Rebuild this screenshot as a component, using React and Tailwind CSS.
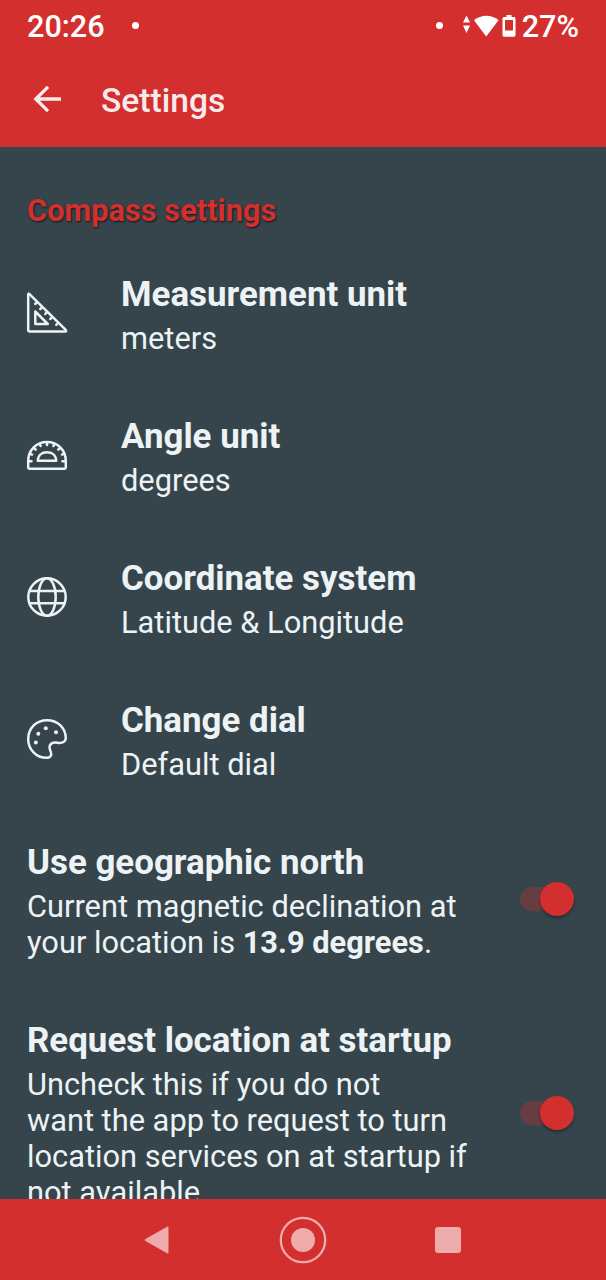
const iconProps = {
  width: 42,
  height: 42,
  viewBox: '0 0 42 42',
  fill: 'none',
  stroke: 'currentColor',
  strokeWidth: 2.5,
  strokeLinecap: 'round',
  strokeLinejoin: 'round',
}

const SetSquareIcon = () => (
  <svg {...iconProps}>
    <path d="M2.2 2.8 Q2.2 1 3.7 2.3 L39.5 37.7 Q41 39.5 39 39.5 H3.4 Q2.2 39.5 2.2 38.3 Z" />
    <path d="M9.3 19.5 V32 H21.8 Z" />
    <path d="M11 10.3 L9.2 12 M16 15.3 L14.3 17 M21 20.2 L19.3 22 M26 25.2 L24.3 27 M32 31 L30.3 32.8" />
  </svg>
)

const ProtractorIcon = () => (
  <svg {...iconProps}>
    <path d="M2.2 33.5 V27 C2.2 16 10.5 7.9 21 7.9 C31.5 7.9 39.8 16 39.8 27 V33.5 Q39.8 34.7 38.6 34.7 H3.4 Q2.2 34.7 2.2 33.5 Z" />
    <path d="M11.8 26.8 C12 21.3 16 18.3 21 18.3 C26 18.3 30 21.3 30.2 26.8 Z" />
    <path d="M3 27.2 H5.5 M3.8 19.7 L6 20.6 M8 14 L9.7 15.7 M13.6 9.8 L14.6 12 M21 8.5 V11 M28.4 9.8 L27.4 12 M34 14 L32.3 15.7 M38.2 19.7 L36 20.6 M39 27.2 H36.5" />
  </svg>
)

const GlobeIcon = () => (
  <svg {...iconProps}>
    <circle cx="21" cy="21" r="18.7" />
    <ellipse cx="21" cy="21" rx="8.7" ry="18.7" />
    <path d="M3.5 14.9 H38.5 M3.5 27.2 H38.5" />
  </svg>
)

const PaletteIcon = () => (
  <svg {...iconProps}>
    <path d="M21 2.2 C10 2.2 2.2 10.5 2.2 21 C2.2 31.5 10.2 39.8 20.5 39.8 C24 39.8 26 37.7 25 34.5 C24.3 32 22.8 30.7 23.7 28 C24.8 24.5 28 24.2 31.5 24.7 C36.5 25.6 39.8 23.6 39.8 19.5 C39.3 9.5 31.5 2.2 21 2.2 Z" />
    <g fill="currentColor" stroke="none">
      <circle cx="9.8" cy="24.4" r="2" />
      <circle cx="12.3" cy="15.7" r="2" />
      <circle cx="19.8" cy="10.3" r="2" />
      <circle cx="30" cy="14.2" r="2" />
    </g>
  </svg>
)

const listItems = [
  { title: 'Measurement unit', value: 'meters', Icon: SetSquareIcon },
  { title: 'Angle unit', value: 'degrees', Icon: ProtractorIcon },
  { title: 'Coordinate system', value: 'Latitude & Longitude', Icon: GlobeIcon },
  { title: 'Change dial', value: 'Default dial', Icon: PaletteIcon },
]

const StatusBar = () => (
  <div className="flex h-[53px] items-center pl-[27px] pr-[27px] pt-[2px] text-[30.6px] font-medium leading-none text-white">
    <span>20:26</span>
    <span className="ml-[27px] -mt-1 h-[7px] w-[7px] rounded-full bg-white" />
    <span className="ml-auto -mt-1 h-[7px] w-[7px] rounded-full bg-white" />
    <svg className="-mt-[6px] ml-[20px]" width="54" height="24" viewBox="0 0 54 24" fill="#fff">
      <path d="M0 9.5 L3.5 2.5 L7 9.5 Z M0 12.5 H7 L3.5 20 Z" />
      <path d="M11 7.3 C18 1.2 29 1.2 35.5 7.3 L23.2 23.5 Z" />
      <path fillRule="evenodd" d="M43.5 2 H48.5 V4 H51 Q52.5 4 52.5 5.5 V22 Q52.5 23.8 51 23.8 H41 Q39.5 23.8 39.5 22 V5.5 Q39.5 4 41 4 H43.5 Z M42 7 V17.5 H50 V7 Z" />
    </svg>
    <span className="ml-[5px]">27%</span>
  </div>
)

const Toggle = () => (
  <div className="relative h-[34px] w-[54px] shrink-0">
    <div className="absolute left-0 top-[5px] h-6 w-12 rounded-full bg-[#673d42]" />
    <div className="absolute right-0 top-0 h-[34px] w-[34px] rounded-full bg-[#d32f2f] shadow-[0_2px_3px_rgba(0,0,0,0.35)]" />
  </div>
)

const SwitchItem = ({ title, children }) => (
  <div className="flex items-center justify-between pl-[27px] pr-[32px]">
    <div className="pb-[27px] pt-[33px]">
      <h2 className="text-[34.9px] font-bold leading-[40px]">{title}</h2>
      <p className="mt-[6px] whitespace-nowrap text-[30.8px] leading-[36px]">{children}</p>
    </div>
    <Toggle />
  </div>
)

export default function App() {
  return (
    <div className="flex h-[1280px] w-[606px] flex-col overflow-hidden bg-[#35454b] font-['Roboto',sans-serif] text-[#edf3f5]">
      <header className="h-[147px] shrink-0 bg-[#d32f2f]">
        <StatusBar />
        <div className="flex h-[94px] items-center pl-[33px]">
          <svg className="-mt-[2px]" width="29" height="28" viewBox="0 0 29 28" fill="none" stroke="#f8eaea" strokeWidth="3.3">
            <path d="M28 14 H3 M15 1.8 L2.8 14 L15 26.2" />
          </svg>
          <h1 className="ml-[39px] mt-[2px] text-[33.6px] font-medium leading-none text-[#f8eaea]">Settings</h1>
        </div>
      </header>

      <main className="min-h-0 flex-1 overflow-hidden">
        <div className="h-[95px] pl-[27px] pt-[46px] text-[30.8px] font-bold leading-[36px] text-[#d32f2f] [text-shadow:1px_1px_2px_rgba(0,0,0,0.7)]">
          Compass settings
        </div>
        {listItems.map(({ title, value, Icon }) => (
          <div key={title} className="flex h-[142px] items-center pl-[26px]">
            <Icon />
            <div className="ml-[53px] pb-[27px] pt-[33px]">
              <h2 className="text-[34.9px] font-bold leading-[40px]">{title}</h2>
              <p className="mt-[6px] text-[30.8px] leading-[36px]">{value}</p>
            </div>
          </div>
        ))}
        <SwitchItem title="Use geographic north">
          Current magnetic declination at<br />
          your location is <b>13.9 degrees</b>.
        </SwitchItem>
        <SwitchItem title="Request location at startup">
          Uncheck this if you do not<br />
          want the app to request to turn<br />
          location services on at startup if<br />
          not available
        </SwitchItem>
      </main>

      <nav className="flex h-[81px] shrink-0 items-center bg-[#d32f2f]">
        <svg className="ml-[144px]" width="25" height="28" viewBox="0 0 25 28" fill="#eeabab">
          <path d="M23 .8 Q24.5 0 24.5 1.8 V26.2 Q24.5 28 23 27.2 L1.5 15 Q0 14 1.5 13 Z" />
        </svg>
        <svg className="ml-[110px]" width="48" height="48" viewBox="0 0 48 48">
          <circle cx="24" cy="24" r="22.2" fill="none" stroke="#eeabab" strokeWidth="2.3" />
          <circle cx="24" cy="24" r="12" fill="#eeabab" />
        </svg>
        <div className="ml-[108px] h-[26px] w-[26px] rounded-[3px] bg-[#eeabab]" />
      </nav>
    </div>
  )
}
